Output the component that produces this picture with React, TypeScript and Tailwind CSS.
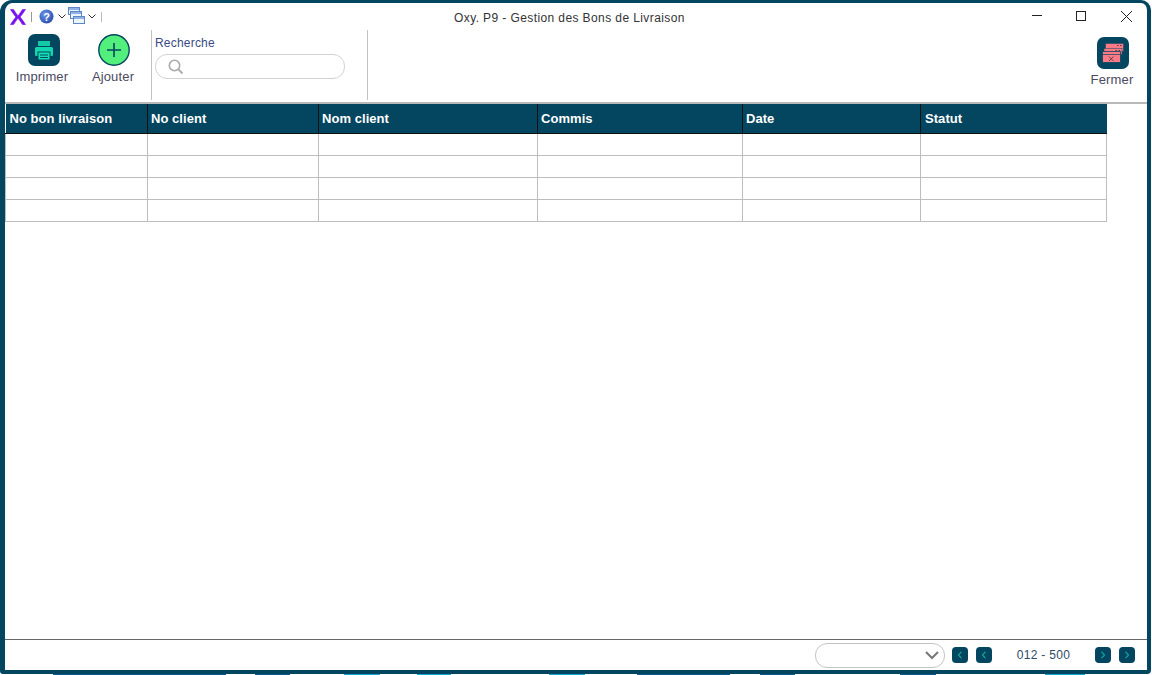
import React from "react";

const DARK = "#04465f";
const cols = [
  { label: "No bon livraison", w: "w-[142px]" },
  { label: "No client", w: "w-[171px]" },
  { label: "Nom client", w: "w-[219px]" },
  { label: "Commis", w: "w-[205px]" },
  { label: "Date", w: "w-[178px]" },
  { label: "Statut", w: "w-[186px]" },
];

function Logo() {
  return (
    <svg width="16" height="16" viewBox="0 0 17 17">
      <path d="M0.5 0.5h3.2c1.8 2.4 3.2 5 4.8 6.6 1.6-1.6 3-4.2 4.8-6.6h3.2c-2 2.8-3.6 5.6-5.8 8 2.2 2.4 3.8 5.2 5.8 8h-3.2c-1.8-2.4-3.2-5-4.8-6.6-1.6 1.6-3 4.2-4.8 6.6h-3.2c2-2.8 3.6-5.6 5.8-8-2.2-2.4-3.8-5.2-5.8-8z" fill="#7a12f0" stroke="#7a12f0" strokeWidth="0.7" />
    </svg>
  );
}
function Chevron() {
  return (
    <svg width="8" height="5" viewBox="0 0 8 5">
      <path d="M0.5 0.5L4 4L7.5 0.5" fill="none" stroke="#333" strokeWidth="1" />
    </svg>
  );
}
function Help() {
  return (
    <svg width="15" height="15" viewBox="0 0 15 15">
      <defs>
        <radialGradient id="h" cx="0.4" cy="0.35" r="0.8">
          <stop offset="0" stopColor="#6f97e8" />
          <stop offset="1" stopColor="#1c3fa6" />
        </radialGradient>
      </defs>
      <circle cx="7.5" cy="7.5" r="7" fill="url(#h)" />
      <text x="7.5" y="11.5" textAnchor="middle" fontSize="11" fontWeight="700" fill="#fff" fontFamily="Liberation Sans">?</text>
    </svg>
  );
}
function Windows() {
  const W = ({ x, y }: { x: number; y: number }) => (
    <g>
      <rect x={x + 0.5} y={y + 0.5} width="11" height="7" fill="#eef4fc" stroke="#5d86c4" />
      <rect x={x + 1} y={y + 1} width="10" height="2" fill="#8fb2e6" />
    </g>
  );
  return (
    <svg width="17" height="17" viewBox="0 0 17 17">
      <W x={0} y={0} />
      <W x={2} y={4} />
      <W x={5} y={9} />
    </svg>
  );
}
function PrinterIcon() {
  return (
    <svg width="32" height="32" viewBox="0 0 32 32">
      <rect width="32" height="32" rx="7" fill={DARK} />
      <rect x="10" y="7" width="12" height="5" fill="#12c8a5" />
      <rect x="7" y="13" width="18" height="9" rx="1.5" fill="#12d6ae" />
      <rect x="10" y="18" width="12" height="8" fill="#12e0b5" stroke={DARK} strokeWidth="1" />
      <path d="M12 21h8M12 23.5h8" stroke={DARK} strokeWidth="1" />
    </svg>
  );
}
function PlusIcon() {
  return (
    <svg width="32" height="32" viewBox="0 0 32 32">
      <circle cx="16" cy="16" r="15.2" fill="#52ef7c" stroke={DARK} strokeWidth="1.4" />
      <path d="M16 9v14M9 16h14" stroke={DARK} strokeWidth="1.6" />
    </svg>
  );
}
function CloseIcon() {
  return (
    <svg width="32" height="32" viewBox="0 0 32 32">
      <rect width="32" height="32" rx="7" fill={DARK} />
      <rect x="8.5" y="6.5" width="18" height="8" fill="#fb7a86" stroke={DARK} strokeWidth="0.5" />
      <path d="M20 8.5h1.5M23 8.5h1.5" stroke="#444" strokeWidth="1" />
      <rect x="7" y="11.5" width="18" height="6" fill="#fb7a86" stroke={DARK} strokeWidth="0.5" />
      <path d="M18.5 13.5h1.5M21.5 13.5h1.5" stroke="#444" strokeWidth="1" />
      <rect x="5.5" y="14.5" width="18" height="11" fill="#fb7a86" stroke={DARK} strokeWidth="0.8" />
      <path d="M5.5 17.5h18" stroke={DARK} strokeWidth="0.7" />
      <path d="M12 19.5l4.5 4.5M16.5 19.5l-4.5 4.5" stroke="#444" strokeWidth="0.9" />
    </svg>
  );
}
function SearchIcon() {
  return (
    <svg width="16" height="16" viewBox="0 0 16 16">
      <circle cx="6.5" cy="6.5" r="5.2" fill="none" stroke="#aaa" strokeWidth="1.6" />
      <path d="M10.5 10.5L14.5 14.5" stroke="#aaa" strokeWidth="1.8" />
    </svg>
  );
}
function PageBtn({ dir }: { dir: "l" | "r" }) {
  return (
    <div className="w-4 h-4 rounded-[4px] bg-[#04465f] flex items-center justify-center">
      <svg width="6" height="8" viewBox="0 0 6 8">
        <path d={dir === "l" ? "M4.5 0.8L1.5 4L4.5 7.2" : "M1.5 0.8L4.5 4L1.5 7.2"} fill="none" stroke="#0f9d96" strokeWidth="1.3" />
      </svg>
    </div>
  );
}
function ToolBtn({ icon, label, className, iconClass }: { icon: React.ReactNode; label: string; className: string; iconClass: string }) {
  return (
    <div className={`flex flex-col items-center ${className}`}>
      <div className={`${iconClass} h-[32px]`}>{icon}</div>
      <span className="mt-[2px] text-[13px] leading-[18px] text-[#4a4a60] tracking-[0.15px]">{label}</span>
    </div>
  );
}

const strip = [
  { w: "w-[53px]", c: "bg-transparent" },
  { w: "w-[173px]", c: "bg-[#0a5a8c]" },
  { w: "w-[29px]", c: "bg-transparent" },
  { w: "w-[35px]", c: "bg-[#0a5a8c]" },
  { w: "w-[54px]", c: "bg-transparent" },
  { w: "w-[36px]", c: "bg-[#12a8d4]" },
  { w: "w-[37px]", c: "bg-transparent" },
  { w: "w-[34px]", c: "bg-[#12a8d4]" },
  { w: "w-[98px]", c: "bg-transparent" },
  { w: "w-[36px]", c: "bg-[#12a8d4]" },
  { w: "w-[52px]", c: "bg-transparent" },
  { w: "w-[93px]", c: "bg-[#0a5a8c]" },
  { w: "w-[30px]", c: "bg-transparent" },
  { w: "w-[35px]", c: "bg-[#0a5a8c]" },
  { w: "w-[105px]", c: "bg-transparent" },
  { w: "w-[36px]", c: "bg-[#0a5a8c]" },
  { w: "w-[109px]", c: "bg-transparent" },
  { w: "w-[40px]", c: "bg-[#12a8d4]" },
];

export default function App() {
  return (
    <div className="w-[1152px] h-[675px] bg-white flex flex-col overflow-hidden font-['Liberation_Sans',Arial,sans-serif]">
      <div className="w-[1151px] h-[674px] flex flex-col bg-white border-t-[3px] border-l-[5px] border-r-[4px] border-b-[4px] border-[#04465f] rounded-tl-[12px] rounded-tr-[10px] rounded-bl-[3px] rounded-br-[4px] overflow-hidden shrink-0">
        {/* title bar */}
        <div className="h-[24px] flex items-center shrink-0 relative">
          <div className="ml-[5px] mt-[3px] flex items-center">
            <Logo />
            <div className="ml-[5px] w-px h-[10px] bg-[#999]" />
            <div className="ml-[7px] -mt-[1px]"><Help /></div>
            <div className="ml-[4px]"><Chevron /></div>
            <div className="ml-[2px] -mt-[3px]"><Windows /></div>
            <div className="ml-[3px]"><Chevron /></div>
            <div className="ml-[5px] w-px h-[10px] bg-[#bbb]" />
          </div>
          <div className="absolute left-[449px] top-[7px] text-[12px] leading-[17px] text-[#333] tracking-[0.4px]">Oxy. P9 - Gestion des Bons de Livraison</div>
          <div className="absolute left-[1027px] top-[12px] w-[10px] h-px bg-[#222]" />
          <div className="absolute left-[1071px] top-[8px] w-[10px] h-[10px] border border-[#222]" />
          <svg className="absolute left-[1116px] top-[8px]" width="11" height="11" viewBox="0 0 11 11">
            <path d="M0 0L11 11M11 0L0 11" stroke="#222" strokeWidth="1" />
          </svg>
        </div>
        {/* toolbar */}
        <div className="h-[77px] flex shrink-0 border-b-[2px] border-[#b9b9b9]">
          <ToolBtn icon={<PrinterIcon />} iconClass="ml-[4px]" label="Imprimer" className="ml-[7px] mt-[7px] w-[60px]" />
          <ToolBtn icon={<PlusIcon />} iconClass="ml-[2px]" label="Ajouter" className="ml-[11px] mt-[7px] w-[60px]" />
          <div className="ml-[8px] mt-[3px] w-[217px] h-[70px] border-l border-r border-[#c4c4c4] pl-[3px]">
            <div className="text-[12px] leading-[14px] mt-[6px] text-[#3a4a85] tracking-[0.2px]">Recherche</div>
            <div className="mt-[4px] w-[190px] h-[25px] rounded-[12px] border border-[#d2d2d2] flex items-center pl-[12px]">
              <SearchIcon />
            </div>
          </div>
          <div className="flex-1" />
          <ToolBtn icon={<CloseIcon />} iconClass="ml-[2px]" label="Fermer" className="mr-[5px] mt-[10px] w-[60px]" />
        </div>
        {/* table area */}
        <div className="flex-1 min-h-0">
          <table className="table-fixed border-collapse w-[1101px]">
            <thead>
              <tr className="h-[29px] bg-[#04465f]">
                {cols.map((c) => (
                  <th key={c.label} className={`${c.w} p-0 pl-[3px] first:pl-[4px] last:pl-[4px] text-left text-[13px] font-bold text-white tracking-[0.05px] border-r border-b border-b-[#111] border-r-[#111] last:border-r-[#04465f]`}>
                    {c.label}
                  </th>
                ))}
              </tr>
            </thead>
            <tbody>
              {[0, 1, 2, 3].map((r) => (
                <tr key={r} className="h-[22px]">
                  {cols.map((c) => (
                    <td key={c.label} className="p-0 border-r border-b border-[#bdbdbd] first:border-l" />
                  ))}
                </tr>
              ))}
            </tbody>
          </table>
        </div>
        {/* footer */}
        <div className="h-[31px] shrink-0 border-t border-[#666] flex items-center">
          <div className="ml-[810px] w-[130px] h-[25px] rounded-[12px] border border-[#c4c4c4] flex items-center justify-end pr-[5px]">
            <svg width="14" height="9" viewBox="0 0 14 9">
              <path d="M1 1L7 7L13 1" fill="none" stroke="#777" strokeWidth="2" />
            </svg>
          </div>
          <div className="ml-[7px]"><PageBtn dir="l" /></div>
          <div className="ml-[8px]"><PageBtn dir="l" /></div>
          <div className="w-[103px] text-center text-[12px] text-[#2f4a66] tracking-[0.3px]">012 - 500</div>
          <PageBtn dir="r" />
          <div className="ml-[8px]"><PageBtn dir="r" /></div>
        </div>
      </div>
      <div className="h-px flex shrink-0">
        {strip.map((s, i) => (
          <div key={i} className={`${s.w} ${s.c} h-px`} />
        ))}
      </div>
    </div>
  );
}
